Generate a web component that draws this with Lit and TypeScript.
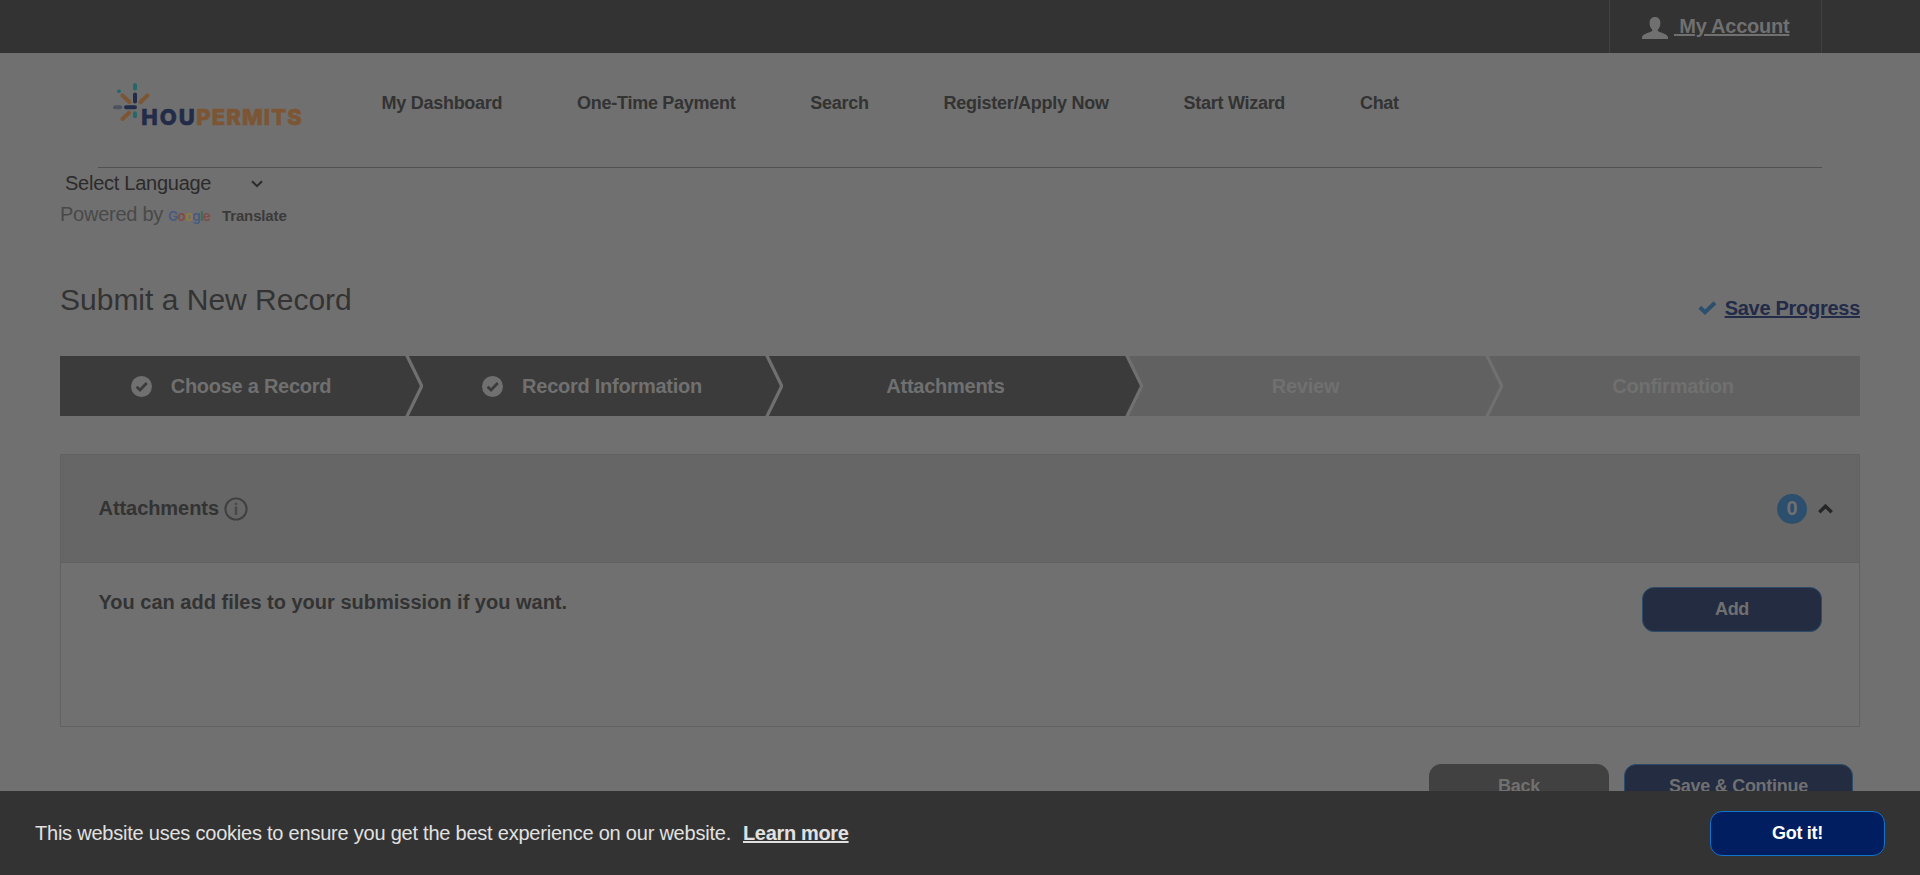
import { LitElement, html, css, svg, nothing } from 'lit';
import { customElement } from 'lit/decorators.js';
import { classMap } from 'lit/directives/class-map.js';

interface Step {
  label: string;
  done?: boolean;
  active?: boolean;
}

const NAV = ['My Dashboard', 'One-Time Payment', 'Search', 'Register/Apply Now', 'Start Wizard', 'Chat'];

const STEPS: Step[] = [
  { label: 'Choose a Record', done: true, active: true },
  { label: 'Record Information', done: true, active: true },
  { label: 'Attachments', active: true },
  { label: 'Review' },
  { label: 'Confirmation' },
];

const logo = svg`
  <svg class="logo" width="200" height="56" viewBox="0 0 200 56">
    <g fill="none" stroke-width="4" stroke-linecap="round">
      <path stroke="#24686a" d="M23 5V8.4M23 33.2V36.2"/>
      <path stroke="#222b48" d="M23 14.4V21.6M14 27.2H23"/>
      <path stroke="#7c5534" d="M10.4 15.400L17.4 22M35.4 15.400L28.4 22.2M10.4 39L17.2 32.800"/>
      <path stroke="#4d5260" d="M3 27.2H8.2"/>
    </g>
    <circle cx="7" cy="11.2" r="1.900" fill="#24686a"/>
    <text class="word" x="29.3" y="44.700" textLength="53.5" fill="#222b48" stroke="#222b48">HOU</text>
    <text class="word" x="84.3" y="44.700" textLength="105.5" fill="#7c5534" stroke="#7c5534">PERMITS</text>
  </svg>`;

@customElement('app-root')
export class AppRoot extends LitElement {
  static styles = css`
    :host {
      display: block;
      height: 875px;
      overflow: hidden;
      background: #707070;
      color: #333;
      font-family: 'Liberation Sans', Arial, sans-serif;
      font-size: 20px;
      letter-spacing: -0.26px;
    }
    * { box-sizing: border-box; }
    svg { display: block; flex: none; }
    .topbar {
      display: flex;
      justify-content: flex-end;
      height: 53px;
      padding-right: 98px;
      background: #333;
    }
    .account {
      display: flex;
      align-items: center;
      gap: 6px;
      width: 213px;
      padding: 0 0 1px 32px;
      border: solid #424242;
      border-width: 0 1px;
      color: #707070;
      font-weight: bold;
    }
    .account svg { margin-top: 3px; }
    .account-link { text-decoration: underline; white-space: pre; line-height: 52px; }
    .header {
      display: flex;
      height: 115px;
      margin: 0 98px;
      border-bottom: 1px solid #505050;
    }
    .logo { margin: 27px 0 0 14px; }
    .word {
      font: 800 22px Inter, sans-serif;
      letter-spacing: 0;
      stroke-width: 0.6px;
    }
    .nav {
      display: flex;
      gap: 74.8px;
      margin-left: 69.5px;
      font-size: 18px;
      font-weight: bold;
      line-height: 100px;
      letter-spacing: -0.27px;
      white-space: nowrap;
    }
    .main { padding: 0 60px; }
    .language {
      display: flex;
      align-items: center;
      justify-content: space-between;
      width: 203px;
      height: 30px;
      padding-left: 5px;
      color: #2b2b2b;
      line-height: 30px;
    }
    .language svg { margin-top: 2px; }
    .powered {
      display: flex;
      align-items: baseline;
      height: 32px;
      color: #494949;
      line-height: 32px;
    }
    .google {
      width: 43px;
      margin: 0 11px 0 5px;
      font: 600 13.5px/32px Inter, sans-serif;
      letter-spacing: -0.75px;
    }
    .g-blue { color: #455a80; }
    .g-red { color: #824a48; }
    .g-yellow { color: #8f7c3a; }
    .g-green { color: #3f6b4c; }
    .translate { font-size: 15px; font-weight: bold; letter-spacing: -0.14px; color: #3a3a3a; }
    .title-row {
      display: flex;
      justify-content: space-between;
      height: 126px;
      padding-top: 50px;
    }
    .title {
      margin: 0;
      font-size: 30px;
      font-weight: normal;
      line-height: 40px;
      letter-spacing: 0;
    }
    .save {
      display: flex;
      align-items: center;
      gap: 8px;
      height: 56px;
      color: #222b48;
      font-weight: bold;
      letter-spacing: -0.28px;
    }
    .save-link { text-decoration: underline; }
    .steps {
      display: grid;
      grid-template-columns: repeat(5, 360px);
      height: 60px;
    }
    .step {
      display: flex;
      align-items: center;
      justify-content: center;
      gap: 19px;
      position: relative;
      padding-right: 29px;
      background: #616161;
      color: #707070;
      font-weight: bold;
      white-space: nowrap;
    }
    .step.done { padding-right: 16px; }
    .step.first { padding-right: 18px; }
    .step.last { padding-right: 14px; }
    .step.active { background: #3b3b3b; }
    .arrow { position: absolute; right: -3px; top: 0; z-index: 1; }
    .panel { height: 273px; margin-top: 38px; border: 1px solid #616161; }
    .panel-head {
      display: flex;
      align-items: center;
      height: 108px;
      padding: 0 26px 0 37.5px;
      background: #666;
      border-bottom: 1px solid #616161;
      font-weight: bold;
    }
    .panel-title { letter-spacing: -0.06px; }
    .info { margin: 1px auto 0 5.5px; }
    .badge {
      width: 30px;
      height: 30px;
      margin-right: 11px;
      border-radius: 50%;
      background: #2c4f6d;
      color: #707070;
      line-height: 28px;
      text-align: center;
      letter-spacing: 0;
    }
    .panel-body {
      display: flex;
      justify-content: space-between;
      align-items: flex-start;
      padding: 24px 37px 0 37.5px;
    }
    .note {
      margin: 0;
      font-weight: bold;
      line-height: 30px;
      letter-spacing: 0;
    }
    .button {
      flex: none;
      width: 180px;
      height: 45px;
      padding: 0;
      border: 1px solid #2b4b69;
      border-radius: 12px;
      background: #242c41;
      color: #707070;
      font: bold 18px/43px 'Liberation Sans', Arial, sans-serif;
      letter-spacing: -0.28px;
      text-align: center;
    }
    .button.back { background: #414141; border-color: #414141; }
    .button.continue { width: 229px; }
    .button.accept { width: 175px; background: #001e60; border-color: #1373cb; color: #fff; }
    .actions {
      display: flex;
      justify-content: flex-end;
      gap: 15px;
      padding: 37px 7px 0;
    }
    .cookies {
      position: fixed;
      inset: auto 0 0;
      z-index: 2;
      display: flex;
      align-items: center;
      height: 84px;
      padding: 0 35px;
      background: #333;
      color: #e1e1e1;
    }
    .cookie-text { letter-spacing: -0.225px; line-height: 30px; }
    .learn {
      margin: 0 auto 0 12px;
      font-weight: bold;
      text-decoration: underline;
      letter-spacing: -0.33px;
    }
  `;

  private renderStep(step: Step, i: number) {
    const classes = {
      step: true,
      active: !!step.active,
      done: !!step.done,
      first: i === 0,
      last: i === STEPS.length - 1,
    };
    const tone = step.active ? '#3b3b3b' : '#616161';
    const next = STEPS[i + 1]?.active ? '#3b3b3b' : '#616161';
    return html`
      <div class=${classMap(classes)}>
        ${step.done
          ? html`<svg width="21" height="21" viewBox="0 0 21 21">
              <circle cx="10.5" cy="10.5" r="10.5" fill="#707070"/>
              <path d="M5.6 10.8L9 14L15.8 7" fill="none" stroke="#3b3b3b" stroke-width="2.7"/>
            </svg>`
          : nothing}
        <span>${step.label}</span>
        ${i < STEPS.length - 1
          ? html`<svg class="arrow" width="18" height="60" viewBox="0 0 18 60">
              <path d="M0 0H18V60H0Z" fill=${next}/>
              <path d="M0 0H1L16 30L1 60H0Z" fill=${tone}/>
              <path d="M1.6 -1L16.4 29.2V30.8L1.6 61" fill="none" stroke="#707070" stroke-width="3.2"/>
            </svg>`
          : nothing}
      </div>`;
  }

  render() {
    return html`
      <div class="topbar">
        <div class="account">
          <svg width="26" height="22" viewBox="0 0 26 22">
            <path fill="#707070" d="M13 0C16.400 0 18.400 2.400 18.400 6C18.400 9 17.300 11.500 15.800 12.600V14C18 15.500 26 17 26 20.500V22H0V20.500C0 17 8 15.500 10.200 14V12.600C8.700 11.500 7.600 9 7.600 6C7.600 2.400 9.600 0 13 0Z"/>
          </svg>
          <span class="account-link"> My Account</span>
        </div>
      </div>
      <header class="header">
        ${logo}
        <nav class="nav">${NAV.map((item) => html`<span>${item}</span>`)}</nav>
      </header>
      <main class="main">
        <div class="language">
          <span>Select Language</span>
          <svg width="12" height="8" viewBox="0 0 12 8">
            <path d="M1 1.200L6 6.200L11 1.200" fill="none" stroke="#2b2b2b" stroke-width="2"/>
          </svg>
        </div>
        <div class="powered">
          <span>Powered by</span>
          <span class="google"><span class="g-blue">G</span><span class="g-red">o</span><span class="g-yellow">o</span><span class="g-blue">g</span><span class="g-green">l</span><span class="g-red">e</span></span>
          <span class="translate">Translate</span>
        </div>
        <div class="title-row">
          <h1 class="title">Submit a New Record</h1>
          <div class="save">
            <svg width="19" height="14" viewBox="0 0 19 14">
              <path d="M1.800 6.300L7 11.200L17 1.700" fill="none" stroke="#2c4f6d" stroke-width="4"/>
            </svg>
            <span class="save-link">Save Progress</span>
          </div>
        </div>
        <div class="steps">${STEPS.map((s, i) => this.renderStep(s, i))}</div>
        <section class="panel">
          <div class="panel-head">
            <span class="panel-title">Attachments</span>
            <svg class="info" width="24" height="24" viewBox="0 0 24 24">
              <circle cx="12" cy="12" r="10.600" fill="none" stroke="#3f3f3f" stroke-width="1.900"/>
              <path d="M12 9.500V18M12 5.800V8" fill="none" stroke="#484848" stroke-width="2.400"/>
            </svg>
            <span class="badge">0</span>
            <svg width="15" height="10" viewBox="0 0 15 10">
              <path d="M1.300 8.300L7.500 2.200L13.700 8.300" fill="none" stroke="#262626" stroke-width="3.400"/>
            </svg>
          </div>
          <div class="panel-body">
            <p class="note">You can add files to your submission if you want.</p>
            <button class="button">Add</button>
          </div>
        </section>
        <div class="actions">
          <button class="button back">Back</button>
          <button class="button continue">Save &amp; Continue</button>
        </div>
      </main>
      <div class="cookies">
        <span class="cookie-text">This website uses cookies to ensure you get the best experience on our website.</span>
        <span class="learn">Learn more</span>
        <button class="button accept">Got it!</button>
      </div>`;
  }
}
